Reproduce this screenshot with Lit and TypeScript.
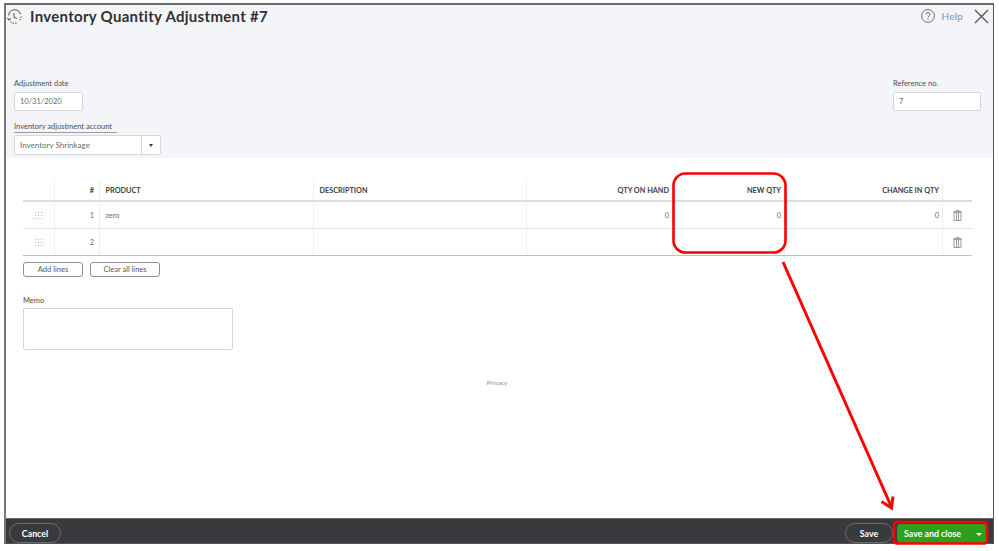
import { LitElement, html, css, svg } from "lit";
import { customElement } from "lit/decorators.js";

const trash = html`<svg class="trash" width="9" height="11" viewBox="0 0 9 11" fill="none" stroke="#9a9ca1" stroke-width="1"><path d="M0 1.8h9M3 1.8V.5h3v1.3M1 2.5h7v8H1zM3.5 3v7M5.5 3v7"/></svg>`;
const grip = html`<svg class="grip" width="7" height="7" viewBox="0 0 7 7" fill="#b4b6ba"><rect x="0" y="0" width="1" height="1"/><rect x="3" y="0" width="1" height="1"/><rect x="6" y="0" width="1" height="1"/><rect x="0" y="3" width="1" height="1"/><rect x="3" y="3" width="1" height="1"/><rect x="6" y="3" width="1" height="1"/><rect x="0" y="6" width="1" height="1"/><rect x="3" y="6" width="1" height="1"/><rect x="6" y="6" width="1" height="1"/></svg>`;

const row = (n: string, product: string, hand: string, nq: string, change: string) => html`
  <div class="row">
    <div class="c handle">${grip}</div>
    <div class="c num">${n}</div>
    <div class="c">${product}</div>
    <div class="c"></div>
    <div class="c right">${hand}</div>
    <div class="c right">${nq}</div>
    <div class="c right">${change}</div>
    <div class="c del">${trash}</div>
  </div>`;

@customElement("app-root")
export class AppRoot extends LitElement {
  static styles = css`
    :host { display: block; width: 999px; height: 551px; position: relative; background: #fff; overflow: hidden;
      font-family: "Lato", "Open Sans", sans-serif; color: #55585d; }
    .frame { margin: 3px 5px 0 4px; height: 541px; box-sizing: border-box; border: 1px solid #555; border-top: 2px solid #6d6d6d;
      border-left: 2px solid #777; display: flex; flex-direction: column; background: #fff; }
    .head { height: 153px; background: #f4f5f8; box-sizing: border-box; flex: none; display: flex; flex-direction: column; }
    .head > * { flex: none; }
    .titlebar { display: flex; align-items: center; height: 22px; padding: 0 4px 0 1px; }
    .title { font-size: 15px; font-weight: 700; color: #2f3136; margin-left: 8px; letter-spacing: .3px; white-space: nowrap; }
    .spacer { flex: 1; }
    .help { font-size: 10px; color: #8d9096; margin: 0 11px 0 6px; letter-spacing: .2px; }
    .fields { display: flex; justify-content: space-between; margin-top: 52px; align-items: flex-start; padding: 0 12px 0 8px; }
    .label { font-size: 7.5px; color: #4b4e53; line-height: 10px; height: 10px; white-space: nowrap; }
    .input { box-sizing: border-box; background: #fff; border: 1px solid #d4d7dc; border-radius: 2px; font-size: 7.5px; color: #6b6c72;
      display: flex; align-items: center; padding-left: 5px; height: 19px; margin-top: 3px; }
    .date { width: 69px; }
    .ref { width: 88px; }
    .acct { margin-top: 11px; padding-left: 8px; }
    .acct .label { width: fit-content; border-bottom: 1px solid #9a9ca1; padding-right: 5px; }
    .select { width: 147px; padding-left: 5px; margin-top: 2px; height: 20px; font-size: 8px; }
    .select span { flex: 1; }
    .caret { width: 18px; align-self: stretch; border-left: 1px solid #d4d7dc; display: flex; align-items: center; justify-content: center; }
    .caret i { width: 0; height: 0; border: 2.5px solid transparent; border-top: 3px solid #393a3d; border-bottom: 0; }
    .body { flex: 1; padding: 22px 20px 0 17px; position: relative; }
    .grid { width: 949px; }
    .hdr, .row { display: grid; grid-template-columns: 32px 45px 214px 213px 146px 112px 158px 29px; }
    .hdr { height: 20px; border-bottom: 2px solid #dcdde1; font-size: 7.3px; font-weight: 700; color: #404246; }
    .row { height: 26px; border-bottom: 1px solid #e3e4e8; font-size: 7.5px; color: #6b6c72; }
    .row:last-child { border-bottom: 1px solid #bfc1c5; }
    .c { display: flex; align-items: center; padding: 0 3px 0 5.5px; border-right: 1px solid #eceef0; box-sizing: border-box; min-width: 0; white-space: nowrap; }
    .c:last-child { border-right: 0; }
    .right { justify-content: flex-end; }
    .num { justify-content: flex-end; padding-right: 5px; }
    .handle { justify-content: center; padding: 0; }
    .del { justify-content: center; padding: 0; }
    .buttons { display: flex; gap: 7px; margin-top: 6px; }
    .btn { box-sizing: border-box; height: 15px; border: 1px solid #8d9096; border-radius: 3px; font-size: 7.5px; color: #55585d; display: flex;
      align-items: center; justify-content: center; background: #fff; }
    .add { width: 60px; }
    .clear { width: 70px; }
    .memo { margin-top: 19px; }
    .memobox { width: 210px; height: 42px; box-sizing: border-box; border: 1px solid #d4d7dc; border-radius: 2px; margin-top: 2px; }
    .privacy { font-size: 6.5px; color: #8d9096; text-align: center; margin: 28px 2px 0 0; line-height: 10px; }
    .foot { height: 25px; flex: none; background: #393a3d; display: flex; align-items: center; padding: 4px 6px 0 3px; border-top: 1px solid #6a6b6e; box-sizing: border-box; gap: 4px; }
    .pill { box-sizing: border-box; height: 20px; border: 1px solid #6b6c72; border-radius: 10px; font-size: 8.8px; font-weight: 700; color: #fff;
      display: flex; align-items: center; justify-content: center; }
    .cancel { width: 52px; }
    .save { width: 48px; }
    .sc { width: 90px; height: 19px; background: #2ca01c; border-radius: 4px; color: #fff; font-size: 8.8px; font-weight: 700; display: flex;
      align-items: center; padding: 0 5px 0 7px; box-sizing: border-box; justify-content: space-between; }
    .sc i { width: 0; height: 0; border: 3px solid transparent; border-top: 3px solid #fff; border-bottom: 0; margin-top: 2px; }
    .marks { position: absolute; left: 0; top: 0; pointer-events: none; }
  `;

  render() {
    return html`
      <div class="frame">
        <div class="head">
          <div class="titlebar">
            <svg width="15" height="15" viewBox="0 0 15 15" fill="none" stroke="#55585d" stroke-width="1.1">
              <path d="M1.6 6.5A6 6 0 0 1 13.4 5.2"/><path d="M14 7.5a6 6 0 0 1-2 4.4" stroke-dasharray="1.4 1.1"/><path d="M3.5 12.6a6 6 0 0 0 6.5 1.2" stroke-dasharray="1.4 1.1"/>
              <path d="M7 4v4.2l2.8 1.2"/><path d="M.4 9.2l1.6 1.8 1.8-1.6"/>
            </svg>
            <div class="title">Inventory Quantity Adjustment #7</div>
            <div class="spacer"></div>
            <svg width="14" height="14" viewBox="0 0 14 14" fill="none" stroke="#6b6c72" stroke-width="1">
              <circle cx="7" cy="7" r="6.4"/><path d="M5 5.4a2 2 0 1 1 3 1.8c-.7.4-1 .8-1 1.6"/><path d="M7 10v1"/>
            </svg>
            <span class="help">Help</span>
            <svg width="15" height="15" viewBox="0 0 15 15" stroke="#55585d" stroke-width="1.4"><path d="M1 1l13 13M14 1L1 14"/></svg>
          </div>
          <div class="fields">
            <div>
              <div class="label">Adjustment date</div>
              <div class="input date">10/31/2020</div>
            </div>
            <div>
              <div class="label">Reference no.</div>
              <div class="input ref">7</div>
            </div>
          </div>
          <div class="acct">
            <div class="label">Inventory adjustment account</div>
            <div class="input select"><span>Inventory Shrinkage</span><div class="caret"><i></i></div></div>
          </div>
        </div>
        <div class="body">
          <div class="grid">
            <div class="hdr">
              <div class="c"></div><div class="c num">#</div><div class="c">PRODUCT</div><div class="c">DESCRIPTION</div>
              <div class="c right">QTY ON HAND</div><div class="c right">NEW QTY</div><div class="c right">CHANGE IN QTY</div><div class="c"></div>
            </div>
            ${row("1", "zero", "0", "0", "0")}
            ${row("2", "", "", "", "")}
          </div>
          <div class="buttons">
            <div class="btn add">Add lines</div>
            <div class="btn clear">Clear all lines</div>
          </div>
          <div class="memo">
            <div class="label">Memo</div>
            <div class="memobox"></div>
          </div>
          <div class="privacy">Privacy</div>
        </div>
        <div class="foot">
          <div class="pill cancel">Cancel</div>
          <div class="spacer"></div>
          <div class="pill save">Save</div>
          <div class="sc"><span>Save and close</span><i></i></div>
        </div>
      </div>
      <svg class="marks" width="999" height="551" fill="none" stroke="#f00">
        ${svg`
          <rect x="673.5" y="173.5" width="112" height="79" rx="12" stroke-width="2.6"/>
          <path d="M783 262L891 506" stroke-width="3"/>
          <path d="M881.5 501.5L891.5 508L893 496.5" stroke-width="3"/>
          <rect x="894" y="522" width="93" height="21.5" rx="3" stroke-width="2.6"/>
        `}
      </svg>
    `;
  }
}
